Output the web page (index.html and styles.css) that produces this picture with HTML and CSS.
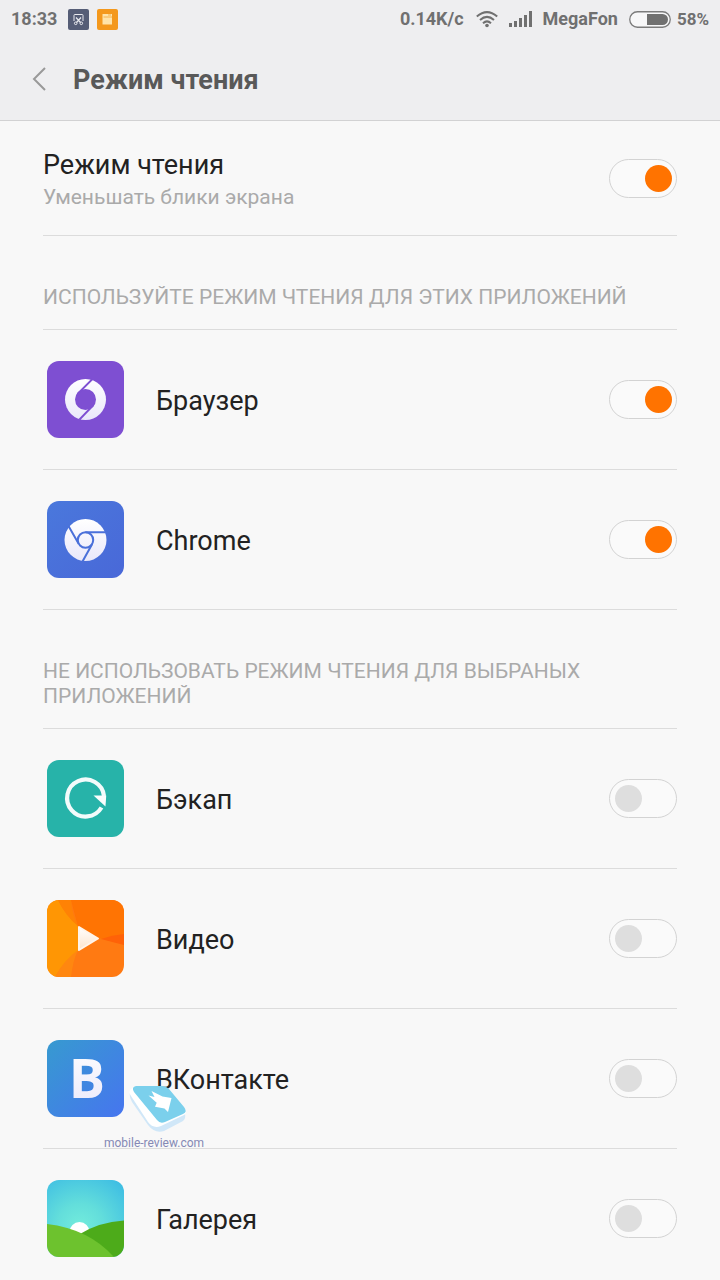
FILE: index.html
```html
<!DOCTYPE html>
<html lang="ru">
<head>
<meta charset="utf-8">
<meta name="viewport" content="width=device-width, initial-scale=1">
<title>Режим чтения</title>
<link rel="stylesheet" href="styles.css">
</head>
<body>
<header class="top">
  <div class="status">
    <div class="status-side">
      <span class="clock">18:33</span>
      <svg class="note" viewBox="0 0 21 21" width="21" height="21" aria-hidden="true">
        <rect width="21" height="21" rx="2" fill="#555d76"/>
        <path d="M6 12V6.300q0-.8.8-.8h7.400q.8 0 .8.8V12" fill="none" stroke="#e8e9ee" stroke-width="1"/>
        <path d="M8 8.500l4.500 5M13 8.500L8.500 13.500" stroke="#e8e9ee" stroke-width="1.200"/>
        <circle cx="7.700" cy="14.300" r="1.300" fill="none" stroke="#e8e9ee"/>
        <circle cx="13.300" cy="14.300" r="1.300" fill="none" stroke="#e8e9ee"/>
      </svg>
      <svg class="note" viewBox="0 0 21 21" width="21" height="21" aria-hidden="true">
        <rect width="21" height="21" rx="2" fill="#f4981c"/>
        <path d="M5.500 5h9.500v10.500H5.500z" fill="#ffe3a8"/>
        <path d="M6.500 8h8.500M11 6h3" stroke="#f3b24f" stroke-width="1"/>
      </svg>
    </div>
    <div class="status-side">
      <span>0.14K/c</span>
      <svg class="wifi" viewBox="0 0 22 17" width="22" height="17" aria-hidden="true">
        <g fill="none" stroke="#707070" stroke-width="2">
          <path d="M.8 5.500Q11-3.300 21.200 5.500"/><path d="M4 9Q11 2.700 18 9"/><path d="M7 12.200Q11 8.600 15 12.200"/>
        </g>
        <circle cx="11" cy="14.500" r="1.800" fill="#707070"/>
      </svg>
      <svg viewBox="0 0 23 16" width="23" height="16" aria-hidden="true">
        <path d="M0 12h3v4H0zM5 10h3v6H5zM10 7h3v9h-3zM15 4h3v12h-3zM20 0h3v16h-3z" fill="#707070"/>
      </svg>
      <span class="carrier">MegaFon</span>
      <svg viewBox="0 0 42 17" width="42" height="17" aria-hidden="true">
        <rect x=".75" y=".75" width="40.500" height="15.500" rx="7.750" fill="#f7f7f8" stroke="#7c7c7c" stroke-width="1.300"/>
        <path d="M18 3h15.500a5.500 5.500 0 0 1 0 11H18z" fill="#707070"/>
      </svg>
      <span class="percent">58%</span>
    </div>
  </div>
  <div class="bar">
    <button class="back" type="button" aria-label="Назад">
      <svg viewBox="0 0 14 24" width="14" height="24" aria-hidden="true"><path d="M13 1L2 12l11 11" fill="none" stroke="#999" stroke-width="2"/></svg>
    </button>
    <h1 class="title">Режим чтения</h1>
  </div>
</header>
<main class="list">
  <div class="row row-main">
    <label class="words" for="reading"><span class="heading">Режим чтения</span><span class="hint">Уменьшать блики экрана</span></label>
    <input class="switch" type="checkbox" role="switch" id="reading" checked>
  </div>

  <h2 class="section">ИСПОЛЬЗУЙТЕ РЕЖИМ ЧТЕНИЯ ДЛЯ ЭТИХ ПРИЛОЖЕНИЙ</h2>
  <div class="row">
    <svg class="app" viewBox="0 0 77 77" width="77" height="77" aria-hidden="true">
      <defs><linearGradient id="white" x1="0" y1="0" x2="0" y2="1"><stop offset="0" stop-color="#fff"/><stop offset="1" stop-color="#e9e8fa"/></linearGradient></defs>
      <rect width="77" height="77" rx="12" fill="#7e4fd2"/>
      <circle cx="38.500" cy="38.500" r="20.500" fill="url(#white)"/>
      <circle cx="38.500" cy="38.500" r="10.500" fill="#7e4fd2"/>
      <path d="M45 18.500L30.500 33M32.500 58.500L46.500 44" fill="none" stroke="#7e4fd2" stroke-width="1.800"/>
    </svg>
    <label class="name" for="browser">Браузер</label>
    <input class="switch" type="checkbox" role="switch" id="browser" checked>
  </div>
  <div class="row">
    <svg class="app" viewBox="0 0 77 77" width="77" height="77" aria-hidden="true">
      <defs><linearGradient id="blue" x1="0" y1="0" x2="1" y2="1"><stop offset="0" stop-color="#4a78dc"/><stop offset="1" stop-color="#4968d8"/></linearGradient></defs>
      <rect width="77" height="77" rx="12" fill="url(#blue)"/>
      <circle cx="38.500" cy="39" r="21" fill="url(#white)"/>
      <circle cx="38.500" cy="39" r="7.700" fill="none" stroke="#4a70da" stroke-width="2"/>
      <path d="M38.500 31.300H60M31.800 42.900L21.500 25M45.200 42.900L35.500 60.500" fill="none" stroke="#4a70da" stroke-width="2"/>
    </svg>
    <label class="name" for="chrome">Chrome</label>
    <input class="switch" type="checkbox" role="switch" id="chrome" checked>
  </div>

  <h2 class="section">НЕ ИСПОЛЬЗОВАТЬ РЕЖИМ ЧТЕНИЯ ДЛЯ ВЫБРАНЫХ ПРИЛОЖЕНИЙ</h2>
  <div class="row">
    <svg class="app" viewBox="0 0 77 77" width="77" height="77" aria-hidden="true">
      <rect width="77" height="77" rx="12" fill="#27b3a9"/>
      <path d="M54.500 47.500A18.500 18.500 0 1 1 57 36" fill="none" stroke="#f3fbfb" stroke-width="4.200"/>
      <path d="M46.500 35.500H59.200L58.500 46.500z" fill="#fafdfd"/>
    </svg>
    <label class="name" for="backup">Бэкап</label>
    <input class="switch" type="checkbox" role="switch" id="backup">
  </div>
  <div class="row">
    <svg class="app" viewBox="0 0 77 77" width="77" height="77" aria-hidden="true">
      <defs>
        <clipPath id="tile"><rect width="77" height="77" rx="12"/></clipPath>
        <linearGradient id="play" x1="0" y1="0" x2="0" y2="1"><stop offset="0" stop-color="#fff"/><stop offset="1" stop-color="#fde3cb"/></linearGradient>
      </defs>
      <g clip-path="url(#tile)">
        <path d="M0 0h77v77H0z" fill="#ff7a12"/>
        <path d="M24 0h53v39H55L31 27z" fill="#ff7403"/>
        <path d="M0 0h11q8 16 20 26v25Q18 60 8 77H0z" fill="#ff9604"/>
        <path d="M11 0h13q1 14 7 26Q18 15 11 0z" fill="#ff8205"/>
        <path d="M8 77Q17 60 31 50q-5 10-7 27z" fill="#ff8710"/>
        <path d="M54 39q11-4 23-5v11q-12-3-23-6z" fill="#ff6208"/>
      </g>
      <path d="M32 27L51 38.500L32 50z" fill="url(#play)" stroke="#fff4ea" stroke-width="2" stroke-linejoin="round"/>
    </svg>
    <label class="name" for="video">Видео</label>
    <input class="switch" type="checkbox" role="switch" id="video">
  </div>
  <div class="row">
    <svg class="app" viewBox="0 0 77 77" width="77" height="77" aria-hidden="true">
      <defs><linearGradient id="vk" x1="0" y1="0" x2="1" y2="1"><stop offset="0" stop-color="#379ad0"/><stop offset="1" stop-color="#4675ef"/></linearGradient></defs>
      <rect width="77" height="77" rx="12" fill="url(#vk)"/>
      <text class="app-letter" x="40" y="58" text-anchor="middle" fill="url(#white)">B</text>
    </svg>
    <label class="name" for="vk-app">ВКонтакте</label>
    <input class="switch" type="checkbox" role="switch" id="vk-app">
    <div class="watermark">
      <svg viewBox="0 0 60 50" width="60" height="50" aria-hidden="true">
        <path d="M2 10q-1 4 2 9l16 23q7 9 16 6l19-10q3-2 2-7L30 36z" fill="#d0e7f8"/>
        <path d="M7 3L3 6q-3 3 0 7l17 26q5 7 13 4l23-11q3-2 2-6z" fill="#fff"/>
        <path d="M8 3h26q4 0 7 3l15 18q4 5-1 7l-18 8q-5 2-8-2L6 9q-3-5 2-6z" fill="#7bd0ec"/>
        <path d="M20.500 12.500l6 1.500-3-6 11 5.500 9 1.500-3.500 14-3.500-3.500-9.500-1.700 1.700-4z" fill="#fff"/>
      </svg>
      <span>mobile-review.com</span>
    </div>
  </div>
  <div class="row">
    <svg class="app" viewBox="0 0 77 77" width="77" height="77" aria-hidden="true">
      <defs><radialGradient id="sky" gradientUnits="userSpaceOnUse" cx="33" cy="47" r="58"><stop offset="0" stop-color="#73ecdc"/><stop offset=".4" stop-color="#63dedb"/><stop offset="1" stop-color="#40bfe3"/></radialGradient></defs>
      <g clip-path="url(#tile)">
        <path d="M0 0h77v77H0z" fill="url(#sky)"/>
        <circle cx="32.500" cy="52" r="10" fill="#fff"/>
        <path d="M32 54.500Q52 42 77 40.500V77H32z" fill="#4dab1a"/>
        <path d="M0 44q42 5 67 33H0z" fill="#6dc22e"/>
      </g>
    </svg>
    <label class="name" for="gallery">Галерея</label>
    <input class="switch" type="checkbox" role="switch" id="gallery">
  </div>
</main>
</body>
</html>
```
FILE: styles.css
```css
* {
  box-sizing: border-box;
}

body {
  margin: 0;
  height: 100vh;
  overflow: hidden;
  background: #f8f8f8;
  color: #222;
  font-family: Roboto, "Noto Sans", sans-serif;
}

.top {
  background: #eeeef0;
  border-bottom: 1px solid #d2d2d3;
}

.status {
  display: flex;
  justify-content: space-between;
  height: 38px;
  padding: 0 11px;
  color: #707070;
  font-size: 18px;
  font-weight: 700;
  line-height: 38px;
}

.status-side {
  display: flex;
  align-items: center;
}

.clock {
  margin-right: 11px;
}

.note {
  margin-right: 8px;
}

.wifi {
  margin: 0 11px 0 12px;
}

.carrier {
  margin: 0 11px;
}

.percent {
  margin-left: 6px;
  font-size: 17px;
}

.bar {
  display: flex;
  align-items: center;
  height: 82px;
  padding: 0 23px;
}

.back {
  display: flex;
  justify-content: center;
  width: 32px;
  padding: 4px 0;
  border: 0;
  background: none;
}

.title {
  margin: 0 0 0 18px;
  padding-top: 2px;
  color: #595959;
  font-size: 27px;
  font-weight: 700;
  line-height: 36px;
}

.list {
  padding: 0 43px;
}

.row {
  position: relative;
  display: flex;
  align-items: center;
  height: 140px;
  padding-left: 4px;
  border-bottom: 1px solid #dcdcdc;
}

.row-main {
  height: 115px;
  padding-left: 0;
}

.words {
  display: flex;
  flex: 1;
  flex-direction: column;
  padding-top: 2px;
}

.heading,
.name {
  font-size: 27px;
  line-height: 36px;
}

.name {
  flex: 1;
  padding-top: 2px;
}

.hint {
  color: #aaa;
  font-size: 21px;
  line-height: 28px;
}

.app {
  margin-right: 32px;
}

.app-letter {
  font-family: "Open Sans", sans-serif;
  font-size: 54px;
  font-weight: 700;
}

.section {
  margin: 0;
  padding: 49px 0 19px;
  border-bottom: 1px solid #dcdcdc;
  color: #aaa;
  font-size: 21px;
  font-weight: 400;
  line-height: 25px;
}

.switch {
  appearance: none;
  width: 68px;
  height: 39px;
  margin: 0;
  padding: 5px 4px 5px 5px;
  border: 1px solid #d3d3d3;
  border-radius: 20px;
  background: #fafafa;
}

.switch::before {
  content: "";
  display: block;
  width: 27px;
  height: 27px;
  border-radius: 50%;
  background: #dedede;
}

.switch:checked::before {
  margin-left: auto;
  background: #ff7300;
}

.watermark {
  position: absolute;
  top: 74px;
  left: 61px;
  display: flex;
  flex-direction: column;
  align-items: center;
  color: #8589b5;
  font-family: Roboto, sans-serif;
  font-size: 12px;
  line-height: 20px;
}

.watermark svg {
  margin-left: 8px;
}
```
